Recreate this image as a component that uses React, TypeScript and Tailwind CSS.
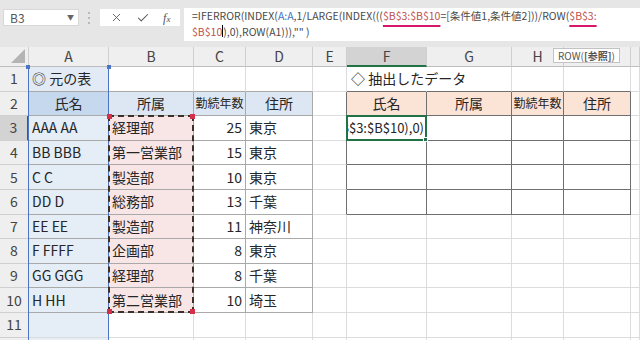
import { Check, X } from 'lucide-react'

const COLS = [
  'col-start-1',
  'col-start-2',
  'col-start-3',
  'col-start-4',
  'col-start-5',
  'col-start-6',
  'col-start-7',
  'col-start-8',
  'col-start-9',
  'col-start-10',
  'col-start-11',
]
const ROWS = [
  'row-start-1',
  'row-start-2',
  'row-start-3',
  'row-start-4',
  'row-start-5',
  'row-start-6',
  'row-start-7',
  'row-start-8',
  'row-start-9',
  'row-start-10',
  'row-start-11',
  'row-start-12',
  'row-start-13',
]
const LETTERS = ['A', 'B', 'C', 'D', 'E', 'F', 'G', 'H', 'I', 'J']

interface Person {
  name: string
  dept: string
  years: number
  addr: string
}

const people: Person[] = [
  { name: 'AAA AA', dept: '経理部', years: 25, addr: '東京' },
  { name: 'BB BBB', dept: '第一営業部', years: 15, addr: '東京' },
  { name: 'C C', dept: '製造部', years: 10, addr: '東京' },
  { name: 'DD D', dept: '総務部', years: 13, addr: '千葉' },
  { name: 'EE EE', dept: '製造部', years: 11, addr: '神奈川' },
  { name: 'F FFFF', dept: '企画部', years: 8, addr: '東京' },
  { name: 'GG GGG', dept: '経理部', years: 8, addr: '千葉' },
  { name: 'H HH', dept: '第二営業部', years: 10, addr: '埼玉' },
]

const headers = ['氏名', '所属', '勤続年数', '住所']

type Tone = 'grid' | 'left' | 'right' | 'none'

const RIGHT_EDGE: Record<Tone, string> = {
  grid: 'border-r-[#dcdcdc]',
  left: 'border-r-[#a9a9a9]',
  right: 'border-r-[#6f6f6f]',
  none: 'border-r-transparent',
}
const BOTTOM_EDGE: Record<Tone, string> = {
  grid: 'border-b-[#dcdcdc]',
  left: 'border-b-[#a9a9a9]',
  right: 'border-b-[#6f6f6f]',
  none: 'border-b-transparent',
}

// r: sheet row (1-based), c: column index (0 = A)
function cellTones(r: number, c: number): [Tone, Tone] {
  const inLeft = r >= 2 && r <= 10 && c <= 3
  const inRight = r >= 2 && r <= 6 && c >= 5 && c <= 8
  let right: Tone = 'grid'
  let bottom: Tone = 'grid'
  if (inLeft) {
    right = 'left'
    bottom = 'left'
  } else if (inRight) {
    right = 'right'
    bottom = 'right'
  }
  if (c === 4 && r >= 2 && r <= 6) right = 'right'
  if (r === 1 && c <= 3) bottom = 'left'
  if (r === 1 && c >= 5 && c <= 8) bottom = 'right'
  if (r === 1 && c === 5) right = 'none'
  return [right, bottom]
}

function cellBg(r: number, c: number): string {
  if (c === 0) {
    if (r === 1) return 'bg-[#e2eaf5]'
    if (r === 2) return 'bg-[#c6d8ee]'
    return 'bg-[#e5edf7]'
  }
  if (r === 2 && c >= 1 && c <= 3) return 'bg-[#dde7f3]'
  if (c === 1 && r >= 3 && r <= 10) return 'bg-[#f8e6e6]'
  if (r === 2 && c >= 5 && c <= 8) return 'bg-[#fbe3d6]'
  return ''
}

function CellText({ r, c }: { r: number; c: number }) {
  if (r === 1 && c === 0) return <span className="pl-[3px]">◎ 元の表</span>
  if (r === 1 && c === 5) return <span className="pl-[4px]">◇ 抽出したデータ</span>
  if (r === 2 && (c <= 3 || (c >= 5 && c <= 8))) {
    const label = headers[c <= 3 ? c : c - 5]
    return (
      <span className={`w-full text-center ${label.length > 2 ? 'text-[12px]' : ''}`}>{label}</span>
    )
  }
  if (r >= 3 && r <= 10 && c <= 3) {
    const p = people[r - 3]
    if (c === 0) return <span className="pl-[3px]">{p.name}</span>
    if (c === 1) return <span className="pl-[3px]">{p.dept}</span>
    if (c === 2) return <span className="w-full pr-[3px] text-right">{p.years}</span>
    return <span className="pl-[3px]">{p.addr}</span>
  }
  if (r === 3 && c === 5) {
    return (
      <span className="flex w-full justify-end overflow-hidden pr-[1px] text-[13px]">
        <span className="whitespace-nowrap">$B$3:$B$10),0)</span>
        <span className="ml-[1px] h-[15px] w-px self-center bg-black" />
      </span>
    )
  }
  return null
}

function Corner() {
  return (
    <div className="col-start-1 row-start-1 flex items-end justify-end border-r border-b border-r-[#cfcfcf] border-b-[#bdbdbd] bg-[#efefef] pr-[3px] pb-[3px]">
      <svg width="14" height="14" viewBox="0 0 14 14">
        <polygon points="14,0 14,14 0,14" fill="#b4b4b4" />
      </svg>
    </div>
  )
}

function Sheet() {
  const sheetRows = Array.from({ length: 12 }, (_, i) => i + 1)

  return (
    <div className="grid grid-cols-[29px_80px_85px_52px_67px_34px_80px_85px_52px_67px_1fr] grid-rows-[20px_repeat(12,24.6px)] text-[14px] text-[#262626]">
      <Corner />
      {LETTERS.map((letter, c) => (
        <div
          key={letter}
          className={`${COLS[c + 1]} row-start-1 flex items-center justify-center border-r border-r-[#cfcfcf] text-[14px] text-[#444] ${
            c === 5
              ? 'border-b-2 border-b-[#217346] bg-[#d3d3d3]'
              : 'border-b border-b-[#bdbdbd] bg-[#efefef]'
          }`}
        >
          {/* J sits off the right edge, its letter is not in view */}
          {c < 9 ? letter : null}
        </div>
      ))}

      {sheetRows.map((r) => (
        <div
          key={`h${r}`}
          className={`col-start-1 ${ROWS[r]} flex items-center justify-center border-b border-b-[#cfcfcf] text-[14px] text-[#444] ${
            r === 3
              ? 'border-r-2 border-r-[#217346] bg-[#d3d3d3]'
              : 'border-r border-r-[#bdbdbd] bg-[#efefef]'
          }`}
        >
          {r}
        </div>
      ))}

      {sheetRows.map((r) =>
        LETTERS.map((letter, c) => {
          const [rt, bt] = cellTones(r, c)
          return (
            <div
              key={`${letter}${r}`}
              className={`${COLS[c + 1]} ${ROWS[r]} flex min-w-0 items-center whitespace-nowrap border-r border-b ${RIGHT_EDGE[rt]} ${BOTTOM_EDGE[bt]} ${cellBg(r, c)}`}
            >
              <CellText r={r} c={c} />
            </div>
          )
        })
      )}

      {/* reference highlight for A:A */}
      <div className="pointer-events-none relative col-start-2 row-start-2 row-end-14 -ml-px border-x-[1.5px] border-x-[#4a74c4]">
        <span className="absolute -top-[2px] -left-[3px] h-[4px] w-[4px] bg-[#4a74c4]" />
        <span className="absolute -top-[2px] -right-[3px] h-[4px] w-[4px] bg-[#4a74c4]" />
      </div>

      {/* reference highlight for $B$3:$B$10 */}
      <div className="pointer-events-none relative col-start-3 row-start-4 row-end-12 -mt-px -ml-px border-2 border-dashed border-[#3b3128]">
        <span className="absolute -top-[3px] -left-[3px] h-[5px] w-[5px] bg-[#d4304b]" />
        <span className="absolute -top-[3px] -right-[3px] h-[5px] w-[5px] bg-[#d4304b]" />
        <span className="absolute -bottom-[3px] -left-[3px] h-[5px] w-[5px] bg-[#d4304b]" />
        <span className="absolute -right-[3px] -bottom-[3px] h-[5px] w-[5px] bg-[#d4304b]" />
      </div>

      {/* active cell F3 */}
      <div className="pointer-events-none relative col-start-7 row-start-4 -mt-px -ml-px border-2 border-[#217346]">
        <span className="absolute -right-[3px] -bottom-[3px] h-[5px] w-[5px] border border-white bg-[#217346]" />
      </div>
    </div>
  )
}

function FormulaBar() {
  const red = 'text-[#c0504d] underline decoration-[#d6176b] decoration-2 underline-offset-[5px]'
  return (
    <div className="flex h-[47px] items-start bg-[#e6e6e6] pt-[9px]">
      <div className="ml-[3px] flex h-[17px] w-[76px] items-center justify-between border border-[#d8d8d8] bg-white pr-[4px] pl-[6px] text-[12px] text-[#555]">
        <span>B3</span>
        <span className="text-[7px] text-[#666]">▼</span>
      </div>
      <div className="mt-[3px] ml-[9px] flex h-[12px] flex-col justify-between">
        <span className="h-[2px] w-[2px] bg-[#b9b9b9]" />
        <span className="h-[2px] w-[2px] bg-[#b9b9b9]" />
        <span className="h-[2px] w-[2px] bg-[#b9b9b9]" />
      </div>
      <div className="ml-[10px] flex h-[17px] w-[80px] items-center justify-around bg-white px-[3px] text-[#555]">
        <X size={13} strokeWidth={1.6} />
        <Check size={14} strokeWidth={1.8} />
        <span className="font-['Liberation_Serif',serif] text-[12px] italic">
          f<span className="text-[9px]">x</span>
        </span>
      </div>
      <div className="-mt-[1px] ml-[4px] h-[33px] flex-1 overflow-hidden bg-white pl-[8px] text-[10.5px] leading-[15.5px] whitespace-nowrap text-[#4a4a4a]">
        <div>
          =IFERROR(INDEX(<span className="text-[#4472c4]">A:A</span>,1/LARGE(INDEX(((
          <span className={red}>$B$3:$B$10</span>=[条件値1,条件値2]))/ROW(
          <span className={red}>$B$3:</span>
        </div>
        <div className="flex items-center">
          <span className={red}>$B$10</span>
          <span className="h-[12px] w-px bg-black" />
          <span>),0),ROW(A1))),"" )</span>
        </div>
      </div>
    </div>
  )
}

export default function App() {
  return (
    <div className="relative h-[340px] w-[640px] overflow-hidden bg-white font-['Noto_Sans_CJK_JP','Noto_Sans',sans-serif]">
      <FormulaBar />
      <Sheet />
      <div className="absolute top-[48px] left-[553px] flex h-[15px] items-center border border-[#c2c2c2] bg-white px-[4px] text-[10px] leading-none text-[#555]">
        ROW(<span className="font-semibold">[参照]</span>)
      </div>
    </div>
  )
}
